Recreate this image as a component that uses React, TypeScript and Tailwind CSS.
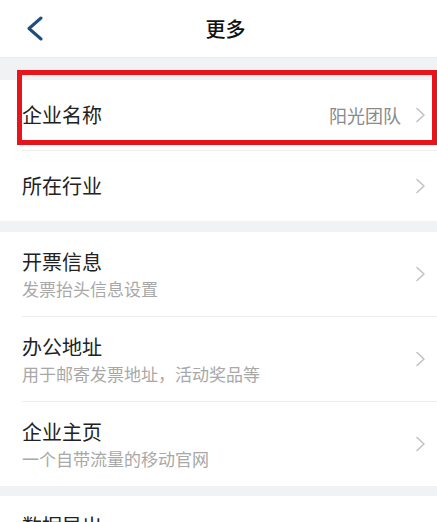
const font = { fontFamily: '"Noto Sans CJK SC", "Noto Sans", sans-serif' };

const Chevron = () => (
    <svg width="12" height="16" viewBox="0 0 12 16" className="shrink-0">
        <polyline points="2,1.5 9,8 2,14.5" fill="none" stroke="#c2c2c2" strokeWidth="1.6" strokeLinecap="round" strokeLinejoin="round" />
    </svg>
);

const SimpleRow = ({ title, value }: { title: string; value?: string }) => (
    <div className="flex h-[70px] items-center justify-between pl-[22px] pr-[10px]">
        <span className="text-[20px] leading-[26px] text-[#222]">{title}</span>
        <div className="flex items-center gap-[14px]">
            {value && <span className="text-[18px] leading-[24px] text-[#8a8a8a]">{value}</span>}
            <Chevron />
        </div>
    </div>
);

const DetailRow = ({ title, desc }: { title: string; desc?: string }) => (
    <div className="flex h-[84px] items-center justify-between pl-[22px] pr-[10px]">
        <div className="flex flex-col gap-[3px]">
            <span className="text-[20px] leading-[26px] text-[#222]">{title}</span>
            <span className="text-[17px] leading-[22px] text-[#a8a8a8]">{desc}</span>
        </div>
        <Chevron />
    </div>
);

const Divider = () => <div className="ml-[22px] h-px bg-[#ededed]" />;

export default function App() {
    return (
        <div className="relative h-[522px] w-[437px] overflow-hidden bg-white" style={font}>
            {/* header */}
            <div className="relative flex h-[58px] items-center justify-center border-b border-[#ebebeb]">
                <svg width="20" height="26" viewBox="0 0 20 26" className="absolute left-[25px] top-[16px]">
                    <polyline points="16,2 4,12.5 16,23" fill="none" stroke="#1f4e7d" strokeWidth="3" strokeLinecap="round" strokeLinejoin="round" />
                </svg>
                <span className="pl-[14px] text-[20px] font-medium text-[#111]">更多</span>
            </div>

            <div className="h-[22px] bg-[#f1f2f4]" />
            <SimpleRow title="企业名称" value="阳光团队" />
            <Divider />
            <SimpleRow title="所在行业" />

            <div className="h-[11px] bg-[#f1f2f4]" />
            <DetailRow title="开票信息" desc="发票抬头信息设置" />
            <Divider />
            <DetailRow title="办公地址" desc="用于邮寄发票地址，活动奖品等" />
            <Divider />
            <DetailRow title="企业主页" desc="一个自带流量的移动官网" />

            <div className="h-[10px] bg-[#f1f2f4]" />
            <DetailRow title="数据导出" desc="导出企业数据" />

            {/* annotation box */}
            <div className="pointer-events-none absolute left-[17px] right-0 top-[70px] h-[75px] border-[5px] border-[#e8141b]" />
        </div>
    );
}
